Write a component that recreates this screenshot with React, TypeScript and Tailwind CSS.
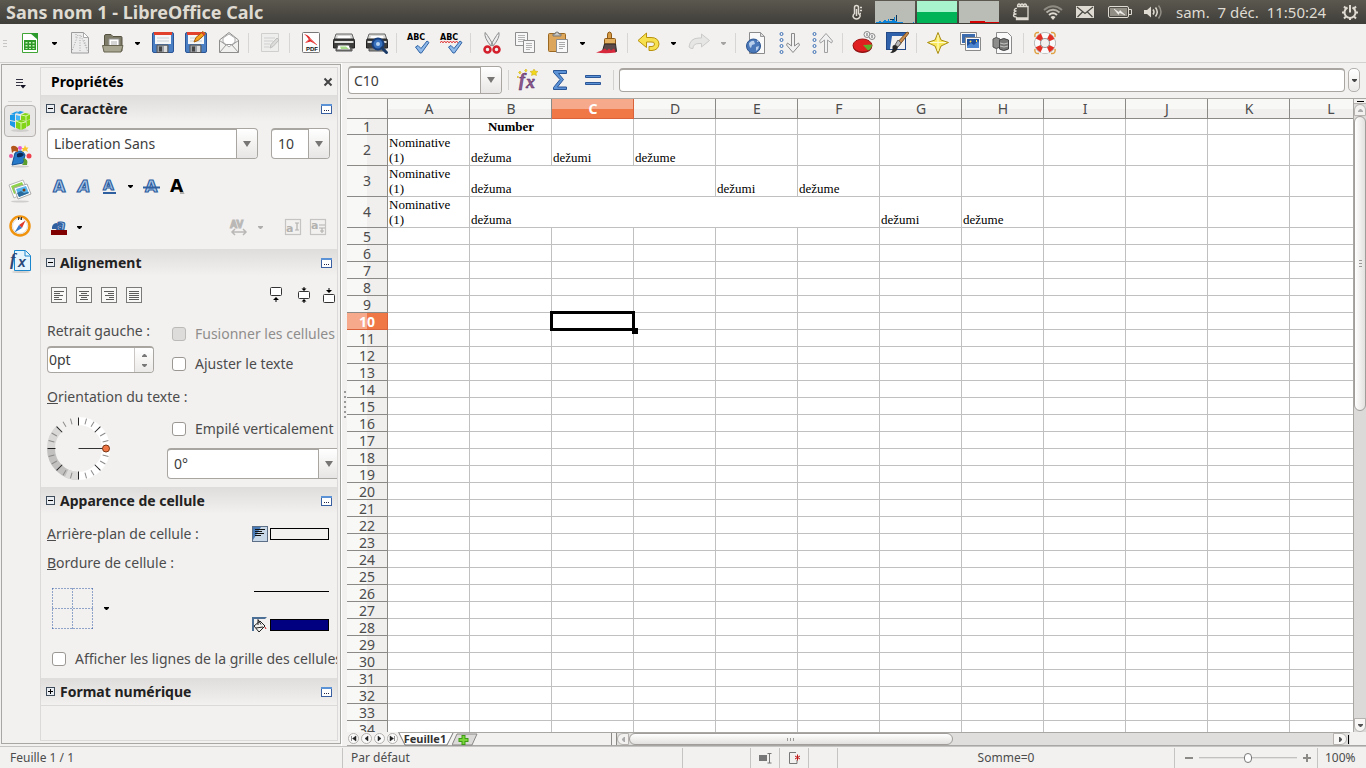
import { useState } from 'react';
import type { ReactNode } from 'react';
import clsx from 'clsx';

const COLUMNS = ['A', 'B', 'C', 'D', 'E', 'F', 'G', 'H', 'I', 'J', 'K', 'L'];
const ROW_COUNT = 34;

type Cell = { text: string; span?: number; wrap?: boolean; bold?: boolean };

const SHEET: Record<number, Record<string, Cell>> = {
  1: { B: { text: 'Number', bold: true } },
  2: {
    A: { text: 'Nominative (1)', wrap: true },
    B: { text: 'dežuma' },
    C: { text: 'dežumi' },
    D: { text: 'dežume' },
  },
  3: {
    A: { text: 'Nominative (1)', wrap: true },
    B: { text: 'dežuma', span: 3 },
    E: { text: 'dežumi' },
    F: { text: 'dežume' },
  },
  4: {
    A: { text: 'Nominative (1)', wrap: true },
    B: { text: 'dežuma', span: 5 },
    G: { text: 'dežumi' },
    H: { text: 'dežume' },
  },
};

function Icon({ size = 24, children }: { size?: number; children: ReactNode }) {
  return (
    <svg width={size} height={size} viewBox={`0 0 ${size} ${size}`} fill="none" className="shrink-0" aria-hidden="true">
      {children}
    </svg>
  );
}

function Caret({ className = 'fill-black' }: { className?: string }) {
  return (
    <svg width="5" height="3" viewBox="0 0 5 3" className={className} aria-hidden="true">
      <path d="M0 0h5v1L3 3H2L0 1z" />
    </svg>
  );
}

function ComboCaret() {
  return (
    <svg width="8" height="6" viewBox="0 0 8 6" className="fill-[#777674]" aria-hidden="true">
      <path d="M0 0h8L4 6z" />
    </svg>
  );
}

/* ---------- toolbar icons ---------- */

const Floppy = (
  <>
    <rect x="1.500" y="1.500" width="21" height="20" rx="1.500" fill="#4a7fc4" stroke="#2a5596" />
    <path d="M3 1h18v3H3z" fill="#e0402c" />
    <path d="M4 4h16v9H4z" fill="#f4f6f8" />
    <path d="M6 7h12M6 10h12" stroke="#c8d0d8" />
    <path d="M6 14h11v7.500H6z" fill="#9aa0a6" stroke="#555" />
    <path d="M8 15.500h3v5H8z" fill="#444" />
    <path d="M13 15h3v6h-3z" fill="#dcdcdc" />
  </>
);

const Printer = (
  <>
    <path d="M4 3h16l2 6H2z" fill="#d8d8d6" stroke="#666" />
    <path d="M6 5h12l1 3H5z" fill="#fff" />
    <path d="M1.500 9.500q0-1.500 1.500-1.500h18q1.500 0 1.500 1.500V17H1.500z" fill="#3d3d3c" stroke="#222" />
    <path d="M2.500 10h19v2h-19z" fill="#dededc" />
    <path d="M4 17h16v3H4z" fill="#8c8c88" stroke="#555" />
  </>
);

const Page = <path d="M4.500 1.500h11l4 4v17h-15z" fill="#fafafa" stroke="#8b8b8b" />;

const NewDoc = (
  <Icon>
    <path d="M4.500 2.500h11l4 4v15h-15z" fill="#fff" stroke="#3fa535" />
    <path d="M12 2h8v7z" fill="#2c9a2c" />
    <path d="M6 9h12v10H6z" fill="#2f9a28" />
    <path d="M7.500 11h2v1.500h-2zM11 11h2v1.500h-2zM14.500 11h2v1.500h-2zM7.500 14h2v1.500h-2zM11 14h2v1.500h-2zM14.500 14h2v1.500h-2zM7.500 17h2v1h-2zM11 17h2v1h-2zM14.500 17h2v1h-2z" fill="#c5efb8" />
  </Icon>
);
const TemplateDoc = (
  <Icon>
    <path d="M3.500 1.500h12l5 5v15.500h-17z" fill="#ececec" stroke="#9c9c9c" />
    <path d="M15.500 1.500v5h5z" fill="#fff" stroke="#aaa" />
    <path d="M10 4L4 20M12 4v17M13 5l7 16M8 3v5M16 9l3 8" stroke="#a5a5a5" strokeDasharray="1 1.500" />
  </Icon>
);
const OpenFolder = (
  <Icon>
    <path d="M3.500 5q0-1.500 1.500-1.500h5l2 2h8q1 0 1 1V20H3.500z" fill="#7e7c68" stroke="#55533f" />
    <path d="M8 8h10v9H8z" fill="#fff" stroke="#999" />
    <path d="M10 11h6M10 13h6" stroke="#aaa" />
    <path d="M1.500 14.500h20.500l-2 6.500H3z" fill="#a8a690" stroke="#66644f" />
  </Icon>
);
const Save = <Icon>{Floppy}</Icon>;
const SaveAs = (
  <Icon>
    {Floppy}
    <path d="M10 11l2-4.500L19 .500 21.500 3 14 9.500z" fill="#f5a21d" stroke="#a25a08" />
    <path d="M18 1.500L20.500 4" stroke="#d33" strokeWidth="1.500" />
  </Icon>
);
const Mail = (
  <Icon>
    <path d="M2.500 9L12 1.500 21.500 9v12.500h-19z" fill="#f1f1f0" stroke="#8e8e8c" />
    <path d="M6 11V7l6-4 6 4v4l-6 5z" fill="#fff" stroke="#aaa" />
    <path d="M2.500 21.500l7-8h5l7 8M2.500 9.500L9 14M21.500 9.500L15 14" stroke="#999" />
  </Icon>
);
const EditDoc = (
  <Icon>
    <path d="M3.500 2.500h17v18h-17z" fill="#eeeeed" stroke="#cfcfce" />
    <path d="M6 7h11M6 10h9M6 13h6M6 16h5" stroke="#cfcfce" />
    <path d="M12 17l1-3.500L19 7l2 2-6 6.500z" fill="#dcdcdb" stroke="#bdbdbc" />
  </Icon>
);
const Pdf = (
  <Icon>
    <rect x="3.500" y="1.500" width="17" height="20" rx="1" fill="#fdfdfd" stroke="#777" />
    <path d="M5 3q5 1 6.500 4.500L18 14l-6.500-3.500L6.500 12 10 8.500Q8 5 5 3z" fill="#e02424" />
    <path d="M6.500 11.500q3-1.500 4-4M11 8l7 6" stroke="#f06a6a" />
    <text x="7" y="20" fontFamily="Liberation Sans" fontWeight="700" fontSize="6" fill="#111">PDF</text>
  </Icon>
);
const Print = (
  <Icon>
    {Printer}
    <path d="M6 14h11l2 5H4.500z" fill="#fff" stroke="#555" />
    <path d="M8 15.500h6l3 2.500H9z" fill="#a7dd8b" />
  </Icon>
);
const Preview = (
  <Icon>
    {Printer}
    <circle cx="13" cy="13" r="5.500" fill="#3770bd" stroke="#183f7d" strokeWidth="2" />
    <circle cx="13" cy="13" r="2" fill="#b8d4f3" />
    <path d="M17 17l4.500 4.500" stroke="#1c3a66" strokeWidth="3" strokeLinecap="round" />
  </Icon>
);
const abc = (
  <text x="1" y="9" fontFamily="DejaVu Sans" fontWeight="700" fontSize="8" fill="#000">ABC</text>
);
const check = (
  <path d="M9.500 16l2.500-1.500 3 3 6-7.500 2 1.500-7.500 10.500H14z" fill="#8fb9e8" stroke="#2f62a5" strokeLinejoin="round" />
);
const Spell = <Icon>{abc}{check}</Icon>;
const AutoSpell = (
  <Icon>
    {abc}
    <path d="M1 11.500l1.500-1 1.500 1 1.500-1 1.500 1 1.500-1 1.500 1 1.500-1 1.500 1 1.500-1 1.500 1 1.500-1 1.500 1" stroke="#e01010" />
    {check}
  </Icon>
);
const Cut = (
  <Icon>
    <path d="M5 1.500q1 0 8 12l-2 1.500Q4 7 5 1.500zM19 1.500q-1 0-8 12l2 1.500q7-8 6-13.500z" fill="#eee" stroke="#8d8d8d" />
    <ellipse cx="7.500" cy="18.500" rx="3" ry="3" stroke="#d3202c" strokeWidth="2.500" />
    <ellipse cx="16.500" cy="18.500" rx="3" ry="3" stroke="#d3202c" strokeWidth="2.500" />
  </Icon>
);
const Copy = (
  <Icon>
    <path d="M2.500 1.500h12v13h-12z" fill="#f7f7f7" stroke="#8d8d8d" />
    <path d="M5 4.500h7M5 6.500h7M5 8.500h7M5 10.500h5" stroke="#b3b3b3" />
    <path d="M10.500 9.500h11v12h-11z" fill="#f7f7f7" stroke="#8d8d8d" />
    <path d="M13 12.500h6M13 14.500h6M13 16.500h6M13 18.500h4" stroke="#b3b3b3" />
  </Icon>
);
const Paste = (
  <Icon>
    <rect x="2.500" y="2.500" width="17" height="18" rx="1" fill="#dca75c" stroke="#9a6820" />
    <path d="M7 5V3h2q0-2 2-2t2 2h2v2z" fill="#c8c8c6" stroke="#777" />
    <path d="M10.500 8.500h11v13h-11z" fill="#f9f9f9" stroke="#8d8d8d" />
    <path d="M13 11.500h6M13 13.500h6M13 15.500h6M13 17.500h4" stroke="#aaa" />
  </Icon>
);
const Brush = (
  <Icon>
    <path d="M11.500 8V4q0-3 2-3t2 3v4z" fill="#d99c46" stroke="#8e5a15" />
    <path d="M9.500 7.500h9q1 0 1 1V13h-11V8.500q0-1 1-1z" fill="#e4b062" stroke="#8e5a15" />
    <path d="M8.500 13h11l1 7.500-14-.500z" fill="#5c4a4a" stroke="#2e2828" />
    <path d="M0 21.500q6-2 9-4l2 2 2-2 2 2 3-2 2 4q-11 1.500-20 0z" fill="#d8283c" />
  </Icon>
);
const Undo = (
  <Icon>
    <path d="M1 9.500L9.500 2v4.500H14q7.500 0 8 6.500-.500 6-7 6.500H12v-4h3q2.500 0 2.500-2.500T14 11H9.500v5.500z" fill="#f7e04e" stroke="#b9920b" strokeLinejoin="round" />
  </Icon>
);
const Redo = (
  <Icon>
    <path d="M22.500 9.500L14.500 3v4H12q-9 0-10 9 2 2 4 1.500Q6 12.500 12 12.500h2.500v3.500z" fill="#e6e6e5" stroke="#cbcbca" strokeLinejoin="round" />
  </Icon>
);
const Globe = (
  <Icon>
    {Page}
    <path d="M15.500 1.500v4h4z" fill="#ddd" stroke="#999" />
    <circle cx="8.500" cy="15" r="7" fill="#4a78b8" stroke="#2d5590" />
    <path d="M4 12q3-3 5-2l1 3-3 1-1 3q-2-1-2-5zM11 16l3-1q0 3-3 5zM12 9l2 2h-2z" fill="#b8d0ec" />
  </Icon>
);
const beads = (
  <>
    <circle cx="3.500" cy="3" r="1.500" stroke="#3b6fb4" />
    <circle cx="3.500" cy="9" r="1.500" stroke="#3b6fb4" />
    <circle cx="3.500" cy="15" r="1.500" stroke="#3b6fb4" />
    <circle cx="3.500" cy="21" r="1.500" stroke="#3b6fb4" />
  </>
);
const SortDown = (
  <Icon>
    {beads}
    <path d="M13.500 2.500h3V15l4-3 1 2-6.500 7.500L8.500 14l1-2 4 3z" fill="#f1f1f1" stroke="#8a8a8a" />
  </Icon>
);
const SortUp = (
  <Icon>
    {beads}
    <path d="M13.500 21.500h3V9l4 3 1-2L15 2.500 8.500 10l1 2 4-3z" fill="#f1f1f1" stroke="#a0a0a0" />
  </Icon>
);
const ChartIcon = (
  <Icon>
    <ellipse cx="10.500" cy="16" rx="9.500" ry="6" fill="#8a1010" />
    <ellipse cx="10.500" cy="14.500" rx="9.500" ry="6.500" fill="#e02020" stroke="#9c1212" />
    <path d="M11 14l9-.500q0 4-4 6z" fill="#5cb02c" />
    <circle cx="15" cy="3.500" r="3" fill="#f4f4f4" stroke="#888" />
    <circle cx="20" cy="5.500" r="3" fill="#f4f4f4" stroke="#888" />
    <path d="M15 2v3M20 4v3" stroke="#666" />
  </Icon>
);
const Draw = (
  <Icon>
    <rect x="1.500" y="1.500" width="19" height="17" fill="#2f62ab" stroke="#234a86" />
    <path d="M7 5h13v13H5z" fill="#f2f1f0" />
    <path d="M22 1l2 1-11 14-3-2z" fill="#c98d4d" stroke="#7c4c1c" />
    <path d="M13 9l3 3-3 4-3-2z" fill="#b8b8b8" stroke="#666" />
    <path d="M10 14l3 2q-1 6-8 6 3-2 2.500-5t2.500-3z" fill="#262626" />
  </Icon>
);
const Navigator = (
  <Icon>
    <path d="M12 1.500l3 7.500 7.500 2.500L15 15l-3 7.500L9 15l-7.500-3.500L9 9z" fill="#f9e85c" stroke="#a98d12" />
    <path d="M12 4v16M4 11.500h16" stroke="#fffbd0" />
  </Icon>
);
const Gallery = (
  <Icon>
    <path d="M1.500 1.500h16v12h-16z" fill="#fafafa" stroke="#8a8a8a" />
    <path d="M3 3h13v9H3z" fill="#3d6cae" />
    <path d="M6.500 6.500h15v13h-15z" fill="#fafafa" stroke="#8a8a8a" />
    <path d="M8 8h12v9H8z" fill="#1d4e9c" />
    <path d="M8 15l4-3 3 2 4-4 1 2v5H8z" fill="#4d85ce" />
    <path d="M11 10l1 1M17 10h1" stroke="#ffd94d" strokeWidth="2" />
  </Icon>
);
const DataSource = (
  <Icon>
    {Page}
    <path d="M1 8q3-3 7 0v8q-4 3-7 0z" fill="#8c8c8b" stroke="#555" />
    <path d="M7.500 9q4-3 9 0v9q-5 3-9 0z" fill="#777776" stroke="#444" />
    <path d="M8 12q4 2 8 0M8 15q4 2 8 0" stroke="#c4c4c4" />
  </Icon>
);
const Help = (
  <Icon>
    <path d="M2 6q-1-5 4-4.500M18 1.500q5-.500 4 4.500M2 18q-1 5 4 4.500M18 22.500q5 .500 4-4.500" stroke="#e0a040" strokeWidth="1.500" />
    <circle cx="12" cy="12" r="7.500" stroke="#9a9a98" strokeWidth="6.500" />
    <circle cx="12" cy="12" r="7.500" stroke="#fafafa" strokeWidth="5.500" />
    <circle cx="12" cy="12" r="7.500" stroke="#e33024" strokeWidth="5.500" strokeDasharray="5.200 6.580" strokeDashoffset="-3.300" />
    <circle cx="12" cy="12" r="4.500" fill="#f2f1f0" stroke="#999" />
  </Icon>
);

type Tool = { kind: 'button'; label: string; icon: ReactNode } | { kind: 'menu'; label: string; dim?: boolean } | { kind: 'sep' };
const b = (label: string, icon: ReactNode): Tool => ({ kind: 'button', label, icon });
const m = (label: string, dim = false): Tool => ({ kind: 'menu', label, dim });
const sep: Tool = { kind: 'sep' };

const TOOLS: Tool[] = [
  b('Nouveau', NewDoc), m('Types de document'), b('Modèles', TemplateDoc), b('Ouvrir', OpenFolder), m('Documents récents'),
  b('Enregistrer', Save), b('Enregistrer sous', SaveAs), b('Envoyer', Mail), sep,
  b('Éditer', EditDoc), sep,
  b('Exporter en PDF', Pdf), b('Imprimer', Print), b('Aperçu', Preview), sep,
  b('Orthographe', Spell), b('Vérification automatique', AutoSpell), sep,
  b('Couper', Cut), b('Copier', Copy), b('Coller', Paste), m('Options de collage'), b('Appliquer le format', Brush), sep,
  b('Annuler', Undo), m('Historique'), b('Rétablir', Redo), m('Historique de rétablissement', true), sep,
  b('Hyperlien', Globe), b('Tri croissant', SortDown), b('Tri décroissant', SortUp), sep,
  b('Diagramme', ChartIcon), b('Dessin', Draw), sep,
  b('Navigateur', Navigator), b('Galerie', Gallery), b('Sources de données', DataSource), sep,
  b('Aide', Help),
];

function TitleBar() {
  return (
    <header className="flex h-6 shrink-0 items-center justify-between bg-gradient-to-b from-[#5b584f] to-[#3f3e39] pr-[6px] pl-[6px] text-[#dfdbd2]">
      <h1 className="text-lg leading-6 font-bold whitespace-nowrap">Sans nom 1 - LibreOffice Calc</h1>
      <div className="flex items-center">
        <Icon size={18}>
          <path d="M6.500 10.500v-6q0-2 2-2t2 2v6q2 1 1.500 3-1 2.500-3.500 2.500T5 13.500q0-2 1.500-3z" stroke="#dfdbd2" strokeWidth="1.500" />
          <path d="M8.500 6v7M12 4.500h2M12 7.500h2M12 10.500h1" stroke="#dfdbd2" strokeWidth="1.500" />
        </Icon>
        <div className="ml-[9px] flex gap-[2px]">
          <svg width="40" height="22" viewBox="0 0 40 22" className="bg-[#babdb6]" aria-hidden="true">
            <path d="M1 22v-1h3v-1h2v1h2v-1h1v-1h2v1h2v-2h1v2h3v-1h2v-3h1v4h2v1h6v1zM38 22v-1h1v1z" fill="#0a82d8" />
            <path d="M21 20v-6h1v6zM15 19v-1h4v1z" fill="#0a3355" />
          </svg>
          <svg width="40" height="22" viewBox="0 0 40 22" className="bg-[#a8f4cc]" aria-hidden="true">
            <path d="M0 11h40v11H0z" fill="#00b356" />
          </svg>
          <svg width="40" height="22" viewBox="0 0 40 22" className="bg-[#babdb6]" aria-hidden="true">
            <path d="M11 20h15v1h14v1H11z" fill="#d40000" />
          </svg>
        </div>
        <div className="ml-3 flex items-center gap-3">
          <Icon size={20}>
            <path d="M6 4.500h11v13H5.500V15M5.500 15q-3 0-3-1.500t3-1.500q-3 0-2.500-1.500T5.500 9q-3 0-2-1.500T6 6.500M6.500 4.500q0-2.500 1.500-2.500t1.500 2.500q0-2.500 1.500-2.500t1.500 2.500q0-2.500 1.500-2.500t1.500 2.500" stroke="#dfdbd2" strokeWidth="1.300" />
            <path d="M6 16.500h11" stroke="#dfdbd2" strokeWidth="2.500" />
          </Icon>
          <Icon size={20}>
            <path d="M1 8q9-7.500 18 0" stroke="#8e8b83" strokeWidth="2" />
            <path d="M3.500 10.500q6.500-5.500 13 0" stroke="#b5b2a9" strokeWidth="2" />
            <path d="M6 13q4-3.500 8 0" stroke="#dfdbd2" strokeWidth="2" />
            <path d="M7.500 15q2.500-2 5 0L10 18z" fill="#dfdbd2" />
          </Icon>
          <Icon size={20}>
            <path d="M1 4h18v12H1z" fill="#dfdbd2" />
            <path d="M2 5l8 6.500L18 5M2.500 15l5-5M17.500 15l-5-5" stroke="#4a4943" strokeWidth="1.200" />
          </Icon>
        </div>
        <svg width="26" height="14" viewBox="0 0 26 14" fill="none" className="ml-3" aria-hidden="true">
          <rect x="1.500" y="1.500" width="20" height="11" rx="1.500" stroke="#dfdbd2" />
          <path d="M3 3h17v8H3z" fill="#918e86" />
          <path d="M22 4.500h2.500v5H22" stroke="#dfdbd2" />
          <path d="M7 4l5 3.500 1-2 5 4.500-5.500-2.500-1 2z" fill="#f5f3ee" stroke="#f5f3ee" strokeWidth=".5" />
        </svg>
        <svg width="24" height="18" viewBox="0 0 24 18" fill="none" className="ml-2" aria-hidden="true">
          <path d="M3 7h3l4-3.500v11L6 11H3z" fill="#dfdbd2" />
          <path d="M12 6.500q2 2.500 0 5M14.500 4.500q3.500 4.500 0 9" stroke="#dfdbd2" strokeWidth="1.500" />
          <path d="M17.500 2.500q5 6.500 0 13" stroke="#918e86" strokeWidth="1.500" />
        </svg>
        <time className="ml-[11px] w-[152px] text-[15px] whitespace-pre">sam.  7 déc.  11:50:24</time>
        <div className="ml-3">
          <Icon size={20}>
            <path d="M7.500 5.500a5.500 5.500 0 1 0 5 0" stroke="#dfdbd2" strokeWidth="2" />
            <path d="M10 3v7.500" stroke="#dfdbd2" strokeWidth="2" />
            <path d="M10 15.500V18M2 10.500h2.500M15.500 10.500H18M4 4.500L6 6.500M16 4.500L14 6.500M4 16.500L6 14.500M16 16.500L14 14.500" stroke="#dfdbd2" strokeWidth="2" />
          </Icon>
        </div>
      </div>
    </header>
  );
}

function Toolbar() {
  return (
    <div role="toolbar" aria-label="Standard" className="flex h-[39px] shrink-0 items-center border-b border-[#d3d1cf] pl-[3px]">
      <div className="flex w-[10px] flex-col gap-[2px]">
        <i className="h-px w-1 bg-[#c8c6c4]" />
        <i className="h-px w-1 bg-[#c8c6c4]" />
        <i className="h-px w-1 bg-[#c8c6c4]" />
      </div>
      {TOOLS.map((tool, i) => {
        if (tool.kind === 'sep') {
          return <span key={i} className="mr-[4px] ml-[3px] h-5 w-px shrink-0 bg-[#d8d6d4]" />;
        }
        if (tool.kind === 'menu') {
          return (
            <button key={i} type="button" aria-label={tool.label} className="flex h-8 w-[17px] shrink-0 items-center justify-center">
              <Caret className={tool.dim ? 'fill-[#a5a3a1]' : 'fill-black'} />
            </button>
          );
        }
        return (
          <button key={i} type="button" aria-label={tool.label} className="flex h-8 w-[33px] shrink-0 items-center justify-center">
            {tool.icon}
          </button>
        );
      })}
    </div>
  );
}

/* ---------- sidebar ---------- */

const DECKS = [
  {
    label: 'Propriétés',
    icon: (
      <Icon>
        <ellipse cx="12" cy="21.500" rx="9" ry="1.500" fill="#d0cecc" />
        <path d="M2 6l5-1v7l-5-1zM2 12l5 1v6l-5-3zM8 4l4-2 4 1-4 2zM3 5l4-2 3-1-3 3z" fill="#1c9ae8" />
        <path d="M8 6l4 1v5l-4-1z" fill="#46b6f4" />
        <path d="M13 6l4-2 5 1v5l-4 2-5-1zM8 12l5-1 5 2v6l-5 2-5-2zM18.500 12l3.500-1.500V16l-3.500 2z" fill="#82d416" />
        <path d="M13 6l5 1v5M18 7l4-2M8 12l5 2v7M13 14l5-1" stroke="#d9f8a8" />
      </Icon>
    ),
  },
  {
    label: 'Styles et formatage',
    icon: (
      <Icon>
        <ellipse cx="12" cy="22.500" rx="9" ry="1" fill="#d0cecc" />
        <path d="M7 9q7-5 10 2l-2 8-11 2z" fill="#2678c8" stroke="#134f90" />
        <path d="M9 10q5-3 7 1-3 3-7 2z" fill="#0a2a55" />
        <path d="M3 3q3-3 7 1v4L6 7 4 9z" fill="#b3561c" />
        <path d="M17 1l1 2.500h2.500L19 5.500l1 2.500-3-1.500L14 8l1-2.500L13 4h3z" fill="#f9c52a" />
        <circle cx="3" cy="12" r="2" fill="#e85a9b" />
        <circle cx="12" cy="4" r="2" fill="#e85ad0" />
        <circle cx="21" cy="12" r="2.500" fill="#ef3f4a" />
        <path d="M15 14q6 1 4 7h-5q3-3 1-7z" fill="#5c9e2e" />
      </Icon>
    ),
  },
  {
    label: 'Galerie',
    icon: (
      <Icon>
        <ellipse cx="12" cy="22.500" rx="9" ry="1" fill="#d0cecc" />
        <path d="M1 6l14-5 5 11-14 7z" fill="#fff" stroke="#b8b8b8" />
        <path d="M3 7l11-4 3 7-11 5z" fill="#8fd14a" />
        <path d="M6 9l13-4 4 10-13 5z" fill="#fff" stroke="#a8a8a8" />
        <path d="M8 10l10-3 3 7-10 4z" fill="#57b4ec" />
        <path d="M9 14l4-2 3 2 4-1 1 1-10 4z" fill="#2c6a9c" />
        <circle cx="16" cy="11" r="1.500" fill="#7a3f18" />
      </Icon>
    ),
  },
  {
    label: 'Navigateur',
    icon: (
      <Icon>
        <circle cx="12" cy="12" r="9.500" fill="#fff" stroke="#f0930f" strokeWidth="2.500" />
        <circle cx="12" cy="12" r="7.500" stroke="#ddd" />
        <path d="M17.500 6.500L14 14l-3-3z" fill="#e03a2c" />
        <path d="M6.500 18.500L11 11l3 3z" fill="#3a78c8" />
        <path d="M10.500 6V3l3 3V3" stroke="#333" />
      </Icon>
    ),
  },
  {
    label: 'Fonctions',
    icon: (
      <Icon>
        <ellipse cx="13" cy="23" rx="9" ry="1" fill="#d0cecc" />
        <path d="M6.500 1.500h11l5 5v15h-16z" fill="#e8f4fc" stroke="#1a86cc" />
        <path d="M17 2v5h5" stroke="#1a86cc" />
        <text x="2" y="16" fontFamily="Liberation Serif" fontStyle="italic" fontWeight="700" fontSize="17" fill="#2b4878">f</text>
        <text x="10" y="18" fontFamily="Liberation Sans" fontStyle="italic" fontWeight="700" fontSize="14" fill="#2b4878">x</text>
      </Icon>
    ),
  },
];

function Section({ title, open = true, children }: { title: string; open?: boolean; children?: ReactNode }) {
  return (
    <section>
      <div className="flex h-[27px] items-center bg-gradient-to-b from-[#dfdddb] to-[#f2f1f0] pr-[5px] pl-[5px]">
        <button type="button" aria-label={title} aria-expanded={open} className="shrink-0">
          <Icon size={9}>
            <rect x=".5" y=".5" width="8" height="8" fill="#e9edf2" stroke="#3f4c5c" />
            <path d={open ? 'M2 4.500h5' : 'M2 4.500h5M4.500 2v5'} stroke="#000" />
          </Icon>
        </button>
        <h3 className="ml-[5px] flex-1 text-sm font-bold text-[#222]">{title}</h3>
        <button type="button" aria-label={`Options : ${title}`}>
          <svg width="11" height="10" viewBox="0 0 11 10" fill="none" aria-hidden="true">
            <rect x=".5" y=".5" width="10" height="9" fill="#fff" stroke="#3a5fa0" />
            <path d="M0 1h11" stroke="#5b93d6" strokeWidth="2" />
            <path d="M3 6.500h1M5 6.500h1M7 6.500h1" stroke="#224" />
          </svg>
        </button>
      </div>
      {open && children}
    </section>
  );
}

function Combo({ label, options, className }: { label: string; options: string[]; className: string }) {
  return (
    <div className={clsx('relative h-[31px] shrink-0', className)}>
      <select aria-label={label} className="h-full w-full appearance-none rounded border border-t-2 border-[#a9a5a1] bg-white pl-[6px] text-sm text-[#3c3c3c]">
        {options.map((o) => (
          <option key={o}>{o}</option>
        ))}
      </select>
      <span className="pointer-events-none absolute top-px right-px bottom-px flex w-[21px] items-center justify-center rounded-r-[3px] border-l border-[#a9a5a1] bg-gradient-to-b from-white to-[#e8e6e4]">
        <ComboCaret />
      </span>
    </div>
  );
}

function Check({ disabled, children }: { disabled?: boolean; children: ReactNode }) {
  return (
    <label className={clsx('flex h-5 items-center text-sm whitespace-nowrap', disabled ? 'text-[#8f8d8b]' : 'text-[#4c4c4c]')}>
      <input
        type="checkbox"
        disabled={disabled}
        className="mr-[9px] h-[14px] w-[14px] shrink-0 appearance-none rounded-[3px] border border-[#9b9894] bg-white checked:bg-[#f07746] disabled:border-[#bcbab7] disabled:bg-[#dddcda]"
      />
      <span>{children}</span>
    </label>
  );
}

function LetterButton({ label, children }: { label: string; children: ReactNode }) {
  return (
    <button type="button" aria-label={label} className="flex h-6 w-[25px] shrink-0 items-center justify-center">
      <svg
        width="19"
        height="20"
        viewBox="0 0 19 20"
        className="overflow-visible"
        fontFamily="DejaVu Sans"
        fontWeight="700"
        fontSize="16"
        strokeWidth="1.2"
        aria-hidden="true"
      >
        {children}
      </svg>
    </button>
  );
}

function AlignIcon({ lines }: { lines: string }) {
  return (
    <Icon size={17}>
      <rect x=".5" y=".5" width="15" height="15" fill="#f8f8f7" stroke="#7a7a79" />
      <path d={lines} stroke="#5c5c5b" />
    </Icon>
  );
}

function Dial() {
  const ticks = Array.from({ length: 24 }, (_, i) => i * 15);
  return (
    <svg width="63" height="63" viewBox="-31.500 -31.500 63 63" fill="none" aria-label="Orientation" role="img">
      <path d="M0-27.500A27.500 27.500 0 0 1 0 27.500" stroke="#fff" strokeWidth="8" />
      <path d="M0 27.500A27.500 27.500 0 0 1-27.500 0" stroke="#c2c1c0" strokeWidth="8" />
      <path d="M-27.500 0A27.500 27.500 0 0 1-19 -20" stroke="#d9d8d7" strokeWidth="8" />
      <path d="M0 27.500A27.500 27.500 0 0 1-12 25" stroke="#dcdbda" strokeWidth="8" />
      {ticks.map((t) => (
        <path key={t} d={t % 45 === 0 ? 'M23 0h8' : 'M25 0h6'} stroke={t % 45 === 0 ? '#222' : '#8c8b8a'} transform={`rotate(${t})`} />
      ))}
      <path d="M0 0h27" stroke="#333" />
      <circle cx="27.500" cy="0" r="3.500" fill="#f07746" stroke="#7a3414" />
    </svg>
  );
}

function CharacterSection() {
  return (
    <Section title="Caractère">
      <div className="pt-[6px] pb-[10px] pl-[6px]">
        <div className="flex gap-[13px]">
          <Combo label="Police" options={['Liberation Sans']} className="w-[211px]" />
          <Combo label="Taille" options={['10']} className="w-[59px]" />
        </div>
        <div className="mt-[15px] flex items-center">
          <LetterButton label="Gras">
            <text x="3" y="16" fill="#a9c8ec" stroke="#2f5f9f">A</text>
          </LetterButton>
          <LetterButton label="Italique">
            <text x="3" y="16" fill="#a9c8ec" stroke="#2f5f9f" fontStyle="italic">A</text>
          </LetterButton>
          <LetterButton label="Souligné">
            <text x="3" y="14" fill="#a9c8ec" stroke="#2f5f9f" fontSize="14">A</text>
            <path d="M3 17h13" stroke="#2f5f9f" strokeWidth="2" />
          </LetterButton>
          <button type="button" aria-label="Styles de soulignement" className="flex h-6 w-[17px] items-center justify-center">
            <Caret />
          </button>
          <LetterButton label="Barré">
            <text x="3" y="16" fill="#a9c8ec" stroke="#2f5f9f">A</text>
            <path d="M1 11.500h17" stroke="#2f5f9f" strokeWidth="2" />
          </LetterButton>
          <LetterButton label="Ombre">
            <path d="M10 4l6 13h-3" stroke="#b0aeac" strokeWidth="2" fill="none" />
            <text x="3" y="16" fill="#000" fontSize="17">A</text>
          </LetterButton>
        </div>
        <div className="mt-[17px] flex items-center pr-[6px]">
          <LetterButton label="Couleur de police">
            <text x="6" y="13" fill="#a9c8ec" stroke="#2f5f9f" fontStyle="italic" fontSize="14">a</text>
            <path d="M2 10q1-4 5-4l1 6H2z" fill="#2f5f9f" />
            <path d="M1 13h16v5H1z" fill="#800000" />
          </LetterButton>
          <button type="button" aria-label="Choisir une couleur" className="flex h-6 w-[15px] items-center justify-center">
            <Caret />
          </button>
          <span className="flex-1" />
          <LetterButton label="Espacement">
            <text x="0" y="11" fill="none" stroke="#bab8b6" fontSize="10" fontFamily="Liberation Sans">AV</text>
            <path d="M2 15h14M5 12l-3 3 3 3M13 12l3 3-3 3" fill="none" stroke="#bab8b6" strokeWidth="1.500" />
          </LetterButton>
          <button type="button" aria-label="Choisir un espacement" className="mr-3 flex h-6 w-[17px] items-center justify-center">
            <Caret className="fill-[#b0aeac]" />
          </button>
          <LetterButton label="Exposant">
            <rect x="1.500" y="2.500" width="15" height="15" fill="none" stroke="#c6c4c2" />
            <text x="2" y="15" fill="#b3b1af" fontSize="11">a</text>
            <path d="M11 6h4M13 6v7M11 13h4" stroke="#b3b1af" fill="none" />
          </LetterButton>
          <LetterButton label="Indice">
            <rect x="1.500" y="2.500" width="15" height="15" fill="none" stroke="#c6c4c2" />
            <text x="2" y="12" fill="#b3b1af" fontSize="11">a</text>
            <path d="M10 8h6M10 11h6M13 11v5M11 14h4" stroke="#b3b1af" fill="none" />
          </LetterButton>
        </div>
      </div>
    </Section>
  );
}

const ALIGNS = [
  ['Gauche', 'M3 4.500h10M3 6.500h6M3 8.500h9M3 10.500h5M3 12.500h8'],
  ['Centré', 'M3 4.500h10M5 6.500h6M3 8.500h10M5 10.500h6M4 12.500h8'],
  ['Droite', 'M3 4.500h10M7 6.500h6M4 8.500h9M8 10.500h5M5 12.500h8'],
  ['Justifié', 'M3 4.500h10M3 6.500h10M3 8.500h10M3 10.500h10M3 12.500h10'],
];

function AlignmentSection() {
  return (
    <Section title="Alignement">
      <div className="pt-[7px] pb-[7px] pl-[6px]">
        <div className="flex h-6 items-center">
          {ALIGNS.map(([label, lines]) => (
            <button key={label} type="button" aria-label={label} className="flex h-6 w-[25px] items-center justify-center">
              <AlignIcon lines={lines} />
            </button>
          ))}
          <span className="flex-1" />
          <button type="button" aria-label="Haut" className="w-[28px]">
            <Icon size={16}>
              <rect x="2.500" y=".5" width="11" height="8" rx="1" fill="#fff" stroke="#333" />
              <path d="M8 10l3 3H5zM7.500 12h1v3h-1z" fill="#000" />
            </Icon>
          </button>
          <button type="button" aria-label="Milieu" className="w-[25px]">
            <Icon size={16}>
              <rect x="2.500" y="4.500" width="11" height="7" rx="1" fill="#fff" stroke="#333" />
              <path d="M8 4L5.500 1.500h5zM7.500 0h1v2h-1zM8 12l2.500 2.500h-5zM7.500 14h1v2h-1z" fill="#000" />
            </Icon>
          </button>
          <button type="button" aria-label="Bas" className="w-4">
            <Icon size={16}>
              <rect x="2.500" y="7.500" width="11" height="8" rx="1" fill="#fff" stroke="#333" />
              <path d="M8 6L5 3h6zM7.500 1h1v3h-1z" fill="#000" />
            </Icon>
          </button>
        </div>

        <div className="mt-[14px] flex">
          <div className="w-[120px] shrink-0">
            <label htmlFor="indent" className="block h-5 text-sm leading-5 whitespace-nowrap">
              Retrait <u>g</u>auche :
            </label>
            <div className="mt-[5px] flex h-[27px] w-[107px] overflow-hidden rounded border border-t-2 border-[#a9a5a1] bg-white">
              <input id="indent" defaultValue="0pt" className="min-w-0 flex-1 pl-px text-sm text-[#3c3c3c] outline-none" />
              <span className="flex w-[19px] flex-col items-center justify-center gap-[7px] border-l border-[#c9c6c3] bg-gradient-to-b from-white to-[#eceae8]">
                <Caret className="rotate-180 fill-[#777]" />
                <Caret className="fill-[#777]" />
              </span>
            </div>
            <span className="mt-[14px] block h-5 text-sm leading-5 whitespace-nowrap">
              <u>O</u>rientation du texte :
            </span>
          </div>
          <div className="flex flex-col gap-[10px] pt-[3px] pl-[5px]">
            <Check disabled>Fusionner les cellules</Check>
            <Check>Ajuster le texte</Check>
          </div>
        </div>

        <div className="mt-[10px] flex">
          <div className="w-[120px] shrink-0">
            <Dial />
          </div>
          <div className="shrink-0">
            <div className="pt-[2px] pl-[5px]">
              <Check>Empilé verticalement</Check>
            </div>
            <Combo label="Angle" options={['0°']} className="mt-[9px] w-[173px]" />
          </div>
        </div>
      </div>
    </Section>
  );
}

function AppearanceSection() {
  return (
    <Section title="Apparence de cellule">
      <div className="pt-[10px] pb-[9px] pl-[6px]">
        <div className="flex h-5 items-center text-sm whitespace-nowrap">
          <span><u>A</u>rrière-plan de cellule :</span>
          <button type="button" aria-label="Couleur d'arrière-plan" className="mr-[8px] ml-auto flex items-center gap-[2px]">
            <Icon size={16}>
              <rect x=".5" y=".5" width="15" height="15" fill="#c9d8e8" stroke="#5c6f86" />
              <path d="M1 1h8L1 14z" fill="#4a7ab6" />
              <path d="M3 3.500h10M3 5.500h7M3 7.500h9M3 9.500h6" stroke="#111" />
            </Icon>
            <i className="h-3 w-[59px] border border-black" />
          </button>
        </div>
        <div className="mt-[9px] h-5 text-sm leading-5"><u>B</u>ordure de cellule :</div>
        <div className="mt-[14px] flex h-[46px] items-start justify-between pr-[8px] pl-[5px]">
          <button type="button" aria-label="Bordures" className="flex items-center gap-[10px]">
            <Icon size={42}>
              <path d="M.5 1.500h41M.5 21.500h41M.5 41.500h41M.5 1.500v40M20.500 1.500v40M40.500 1.500v40" stroke="#2f55a0" strokeDasharray="1 2" />
            </Icon>
            <Caret />
          </button>
          <div className="flex h-full flex-col items-end justify-between pt-1">
            <button type="button" aria-label="Style de ligne" className="h-px w-[75px] bg-black" />
            <button type="button" aria-label="Couleur de ligne" className="flex items-center gap-[2px]">
              <Icon size={16}>
                <path d="M0 0h15l-2 2H2v12H0z" fill="#4c6f96" />
                <path d="M2 9l6-5 5 5-6 6z" fill="#f2f1f0" stroke="#222" />
                <path d="M6 8V2.500l3 5M4 11l7-1" stroke="#222" />
                <path d="M13 10l1 2" stroke="#c22" />
              </Icon>
              <i className="h-3 w-[59px] border border-black bg-[#000080]" />
            </button>
          </div>
        </div>
        <div className="mt-4 pl-[5px]">
          <Check>Afficher les lignes de la <u>g</u>rille des cellules</Check>
        </div>
      </div>
    </Section>
  );
}

function Sidebar() {
  const [deck, setDeck] = useState('Propriétés');
  return (
    <aside className="mt-px mb-[2px] ml-px flex w-[340px] shrink-0 border border-[#a9a7a4] text-[#4c4c4c]">
      <nav className="flex w-[38px] shrink-0 flex-col items-center pt-[9px] pr-[2px]">
        <button type="button" aria-label="Menu" className="h-5">
          <Icon size={16}>
            <path d="M4 3.500h7M4 6.500h7M4 9.500h4" stroke="#334" />
            <path d="M8 9h6l-3 3.500z" fill="#112" />
          </Icon>
        </button>
        <i className="mt-[7px] mb-[3px] h-px w-6 bg-[#d8d6d4]" />
        <div className="flex flex-col gap-[3px]">
          {DECKS.map((d) => (
            <button
              key={d.label}
              type="button"
              aria-label={d.label}
              onClick={() => setDeck(d.label)}
              className={clsx('flex h-8 w-8 items-center justify-center rounded border', deck === d.label ? 'border-[#b5b2af] bg-[#e9e7e6]' : 'border-transparent')}
            >
              {d.icon}
            </button>
          ))}
        </div>
      </nav>
      <div className="mt-[2px] mr-[2px] mb-[2px] flex min-w-0 flex-1 flex-col overflow-hidden border border-[#dcdad8]">
        <div className="flex h-[27px] shrink-0 items-center justify-between pr-[4px] pl-[10px]">
          <h2 className="text-sm font-bold text-black">Propriétés</h2>
          <button type="button" aria-label="Fermer">
            <Icon size={10}>
              <path d="M1.500 1.500l7 7M8.500 1.500l-7 7" stroke="#444" strokeWidth="2" />
            </Icon>
          </button>
        </div>
        <CharacterSection />
        <AlignmentSection />
        <AppearanceSection />
        <Section title="Format numérique" open={false} />
        <i className="h-px bg-[#dcdad8]" />
      </div>
    </aside>
  );
}

/* ---------- sheet ---------- */

function FormulaBar() {
  return (
    <div className="flex h-9 shrink-0 items-center border-b border-[#a9a7a4] pb-px">
      <div className="relative ml-px h-7 w-[154px]">
        <input aria-label="Zone de nom" defaultValue="C10" className="h-full w-full rounded border border-t-2 border-[#a9a5a1] bg-white pl-[5px] text-sm text-[#3c3c3c]" />
        <button type="button" aria-label="Plages nommées" className="absolute top-px right-px bottom-px flex w-[21px] items-center justify-center rounded-r-[3px] border-l border-[#a9a5a1] bg-gradient-to-b from-white to-[#e8e6e4]">
          <ComboCaret />
        </button>
      </div>
      <i className="mx-[6px] h-5 w-px bg-[#d3d1cf]" />
      <div className="flex gap-[9px]">
        <button type="button" aria-label="Assistant Fonctions">
          <Icon>
            <text x="4" y="18" fontFamily="Liberation Serif" fontStyle="italic" fontWeight="700" fontSize="18" fill="#8d5a92" stroke="#5a2d60" strokeWidth=".5">f</text>
            <text x="11" y="20" fontFamily="Liberation Serif" fontStyle="italic" fontWeight="700" fontSize="18" fill="#8d5a92" stroke="#5a2d60" strokeWidth=".5">x</text>
            <path d="M19 1l1 2 3 .500-2 1.500.500 2.500-2.500-1-2.500 1 .500-2.500-2-1.500 3-.500zM11 1l1 1.500-1 1.500-1.500-1.500zM5 3l1 1.500L5 6 3.500 4.500zM3 8l.500 1L3 10l-1-1z" fill="#f2d81c" stroke="#c9a810" strokeWidth=".5" />
          </Icon>
        </button>
        <button type="button" aria-label="Somme">
          <Icon>
            <path d="M5.500 2.500h13v3h-8l5 6-6 7.500h9v2.500h-13v-2l6.500-8-6.500-7z" fill="#5c93d6" stroke="#2a5596" />
          </Icon>
        </button>
        <button type="button" aria-label="Fonction">
          <Icon>
            <path d="M4.500 7.500h15v2h-15zM4.500 14.500h15v2h-15z" fill="#5c93d6" stroke="#2a5596" />
          </Icon>
        </button>
      </div>
      <i className="mr-[5px] ml-[8px] h-5 w-px bg-[#d3d1cf]" />
      <input aria-label="Ligne de saisie" className="h-[24px] min-w-0 flex-1 rounded border border-t-2 border-[#a9a5a1] bg-white px-1 text-sm" />
      <button type="button" aria-label="Agrandir" className="mr-[6px] ml-[3px] flex h-6 w-3 items-center justify-center rounded-[5px] border border-[#b3b0ad] bg-gradient-to-b from-white to-[#eceae8]">
        <Caret className="fill-[#444]" />
      </button>
    </div>
  );
}

function SheetRow({ row }: { row: number }) {
  const data = SHEET[row] ?? {};
  const cells: ReactNode[] = [];
  for (let c = 0; c < COLUMNS.length; ) {
    const cell = data[COLUMNS[c]];
    const selected = row === 10 && COLUMNS[c] === 'C';
    cells.push(
      <td
        key={c}
        colSpan={cell?.span ?? 1}
        className={clsx(
          'relative border-r border-b border-[#c0c0c0] p-0 pl-px align-bottom',
          cell?.bold && 'text-center font-bold',
        )}
      >
        {cell?.wrap ? <div className="w-[70px]">{cell.text}</div> : cell?.text}
        {selected && (
          <div className="absolute -top-[2px] -right-[2px] -bottom-[2px] -left-[2px] z-10 border-3 border-black">
            <i className="absolute -right-[6px] -bottom-[6px] h-[6px] w-[6px] bg-black" />
          </div>
        )}
      </td>,
    );
    c += cell?.span ?? 1;
  }
  return (
    <tr className={row === 1 ? 'h-4' : row < 5 ? 'h-[31px]' : 'h-[17px]'}>
      <th
        scope="row"
        className={clsx(
          'border-r border-b p-0 text-sm',
          row < 5 && row > 1 ? 'leading-[30px]' : 'leading-[15px]',
          row === 10
            ? 'border-[#d9623a] bg-linear-to-r from-[#f7a98c] from-50% to-[#f07746] to-50% font-bold text-white'
            : 'border-[#8c8a87] bg-linear-to-r from-[#f8f8f7] from-50% to-[#f0efee] to-50% font-normal text-[#4c4c4c]',
        )}
      >
        {row}
      </th>
      {cells}
    </tr>
  );
}

function Sheet() {
  return (
    <div className="min-w-0 flex-1 overflow-hidden bg-white">
      <table className="w-[1025px] table-fixed border-separate border-spacing-0 text-[13px] leading-[15px] text-black">
        <colgroup>
          <col className="w-[41px]" />
          {COLUMNS.map((c) => (
            <col key={c} className="w-[82px]" />
          ))}
        </colgroup>
        <thead className="text-sm leading-[19px]">
          <tr className="h-5">
            <td className="border-r border-b border-[#8c8a87] bg-[#f5f4f3] p-0" />
            {COLUMNS.map((c) => (
              <th
                key={c}
                scope="col"
                className={clsx(
                  'border-r border-b p-0 pl-px',
                  c === 'C'
                    ? 'border-[#d9623a] bg-linear-to-b from-[#f7a98c] from-50% to-[#f07746] to-50% font-bold text-white'
                    : 'border-[#8c8a87] bg-linear-to-b from-[#f8f8f7] from-50% to-[#f0efee] to-50% font-normal text-[#4c4c4c]',
                )}
              >
                {c}
              </th>
            ))}
          </tr>
        </thead>
        <tbody className="[&_td]:font-[Liberation_Serif,serif]">
          {Array.from({ length: ROW_COUNT }, (_, i) => (
            <SheetRow key={i} row={i + 1} />
          ))}
        </tbody>
      </table>
    </div>
  );
}

function VerticalScroll() {
  return (
    <div className="flex w-[13px] shrink-0 flex-col border-l border-[#a9a7a4] bg-[#dbdad8]">
      <i className="flex h-[5px] items-center justify-center border-b border-[#b5b2af] bg-[#f2f1f0]"><i className="h-px w-[7px] bg-black" /></i>
      <button type="button" aria-label="Défiler vers le haut" className="flex h-[12px] items-center justify-center rounded-t-[6px] border border-[#b5b2af] bg-[#f2f1f0]">
        <Caret className="rotate-180 fill-[#aaa]" />
      </button>
      <div className="flex min-h-0 flex-1 flex-col">
        <div className="flex h-[49%] flex-col items-center justify-center gap-[2px] rounded-[6px] border border-[#a09d9a] bg-linear-to-r from-white to-[#e3e1df]">
          <i className="h-px w-[3px] bg-[#999]" />
          <i className="h-px w-[3px] bg-[#999]" />
          <i className="h-px w-[3px] bg-[#999]" />
        </div>
      </div>
      <button type="button" aria-label="Défiler vers le bas" className="flex h-[14px] items-center justify-center rounded-b-[6px] border border-[#b5b2af] bg-[#f8f7f6]">
        <Caret className="fill-[#555]" />
      </button>
    </div>
  );
}

const NAV = [
  ['Première feuille', 'M3.500 3v5M8 3v5L4.500 5.500z'],
  ['Feuille précédente', 'M7 3v5L4 5.500z'],
  ['Feuille suivante', 'M4 3v5L7 5.500z'],
  ['Dernière feuille', 'M7.500 3v5M3 3v5L6.500 5.500z'],
];

function SheetTabs() {
  return (
    <div className="flex h-[14px] shrink-0 items-center border-b border-[#a9a7a4]">
      <div className="ml-px flex gap-[2px]">
        {NAV.map(([label, d]) => (
          <button key={label} type="button" aria-label={label}>
            <Icon size={11}>
              <circle cx="5.500" cy="5.500" r="5" fill="#fafafa" stroke="#b3b0ad" />
              <path d={d} fill="#222" stroke="#222" strokeWidth=".5" />
            </Icon>
          </button>
        ))}
      </div>
      <div className="flex h-full flex-1 items-center border-t border-[#a9a7a4]">
        <button type="button" className="relative h-[13px] w-[54px] shrink-0 text-center text-[11px] leading-3 font-bold text-[#333]">
          <svg width="56" height="13" viewBox="0 0 56 13" fill="none" className="absolute inset-0" aria-hidden="true">
            <path d="M1 0l6 12h42l6-12z" fill="#fff" />
            <path d="M1 0l6 12h42l6-12" stroke="#777" />
          </svg>
          <span className="relative">Feuille1</span>
        </button>
        <button type="button" aria-label="Insérer une feuille" className="shrink-0">
          <svg width="26" height="13" viewBox="0 0 26 13" fill="none" aria-hidden="true">
            <path d="M0 12L5 1h20l-5 11z" fill="#dcdad8" stroke="#8a8886" />
            <path d="M11.500 2v10M6.500 7h10" stroke="#3c9a14" strokeWidth="4" />
            <path d="M11.500 3v8M7.500 7h8" stroke="#7ad53a" strokeWidth="2" />
          </svg>
        </button>
      </div>
      <div className="flex h-full w-[739px] shrink-0 items-center border-t border-[#a9a7a4] bg-[#dfdedc]">
        <i className="h-full w-[6px] border-x border-[#8c8a87] bg-[#f2f1f0]" />
        <button type="button" aria-label="Défiler à gauche" className="flex h-full w-[12px] items-center justify-center rounded-l-[6px] border border-[#b5b2af] bg-[#f2f1f0]">
          <Caret className="rotate-90 fill-[#aaa]" />
        </button>
        <div className="flex h-full flex-1">
          <div className="flex h-full w-[46%] items-center justify-center gap-[2px] rounded-[6px] border border-[#a09d9a] bg-gradient-to-b from-white to-[#e3e1df]">
            <i className="h-[3px] w-px bg-[#999]" />
            <i className="h-[3px] w-px bg-[#999]" />
            <i className="h-[3px] w-px bg-[#999]" />
          </div>
        </div>
        <button type="button" aria-label="Défiler à droite" className="flex h-full w-[14px] items-center justify-center rounded-r-[6px] border border-[#b5b2af] bg-[#f8f7f6]">
          <Caret className="-rotate-90 fill-[#555]" />
        </button>
        <i className="mx-px h-[9px] w-px bg-black" />
      </div>
      <span className="w-4 shrink-0" />
    </div>
  );
}

function StatusBar() {
  const divider = 'flex h-5 items-center border-l border-[#c6c4c2]';
  return (
    <footer className="flex h-[22px] shrink-0 items-center border-t border-[#c6c4c2] text-xs text-[#4c4c4c]">
      <div className="w-[342px] shrink-0 pl-[10px]">Feuille 1 / 1</div>
      <div className={clsx(divider, 'w-[340px] pl-2')}>Par défaut</div>
      <div className={clsx(divider, 'w-[68px]')} />
      <div className={clsx(divider, 'w-[29px] justify-center')}>
        <Icon size={14}>
          <path d="M1 4h8v6H1z" fill="#777" />
          <path d="M9.500 2.500h4M11.500 3v9M9.500 12h4" stroke="#777" />
        </Icon>
      </div>
      <div className={clsx(divider, 'w-[29px] justify-center')}>
        <Icon size={14}>
          <path d="M9 1.500H2.500v11H10V9" stroke="#777" />
          <path d="M10.500 3.500v6M8 5l5 3M13 5l-5 3" stroke="#c01818" />
        </Icon>
      </div>
      <div className={clsx(divider, 'w-[29px]')} />
      <div className={clsx(divider, 'flex-1 justify-center')}>Somme=0</div>
      <div className={clsx(divider, 'w-[143px] gap-[5px] pl-[9px]')}>
        <button type="button" aria-label="Zoom arrière" className="h-[10px] w-[10px]">
          <Icon size={10}><path d="M1 5h8" stroke="#8c8a87" strokeWidth="2" /></Icon>
        </button>
        <input
          type="range"
          aria-label="Zoom"
          className="h-[10px] w-[98px] appearance-none bg-linear-to-b from-transparent from-40% via-[#b3b1af] via-40% to-transparent to-60% [&::-webkit-slider-thumb]:h-[10px] [&::-webkit-slider-thumb]:w-[8px] [&::-webkit-slider-thumb]:appearance-none [&::-webkit-slider-thumb]:rounded-full [&::-webkit-slider-thumb]:border [&::-webkit-slider-thumb]:border-[#777] [&::-webkit-slider-thumb]:bg-white"
        />
        <button type="button" aria-label="Zoom avant" className="h-[10px] w-[10px]">
          <Icon size={10}><path d="M1 5h8M5 1v8" stroke="#8c8a87" strokeWidth="2" /></Icon>
        </button>
      </div>
      <div className={clsx(divider, 'w-[49px] pl-[7px]')}>100%</div>
    </footer>
  );
}

export default function App() {
  return (
    <div className="flex h-screen flex-col overflow-hidden bg-[#f2f1f0] font-['Noto_Sans',sans-serif]">
      <TitleBar />
      <Toolbar />
      <main className="flex min-h-0 flex-1">
        <Sidebar />
        <div className="flex w-[6px] shrink-0 flex-col items-center justify-center gap-[3px] border-l border-white">
          <i className="h-[2px] w-[2px] bg-[#999]" />
          <i className="h-[2px] w-[2px] bg-[#999]" />
          <i className="h-[2px] w-[2px] bg-[#999]" />
          <i className="h-[2px] w-[2px] bg-[#999]" />
          <i className="h-[2px] w-[2px] bg-[#999]" />
          <i className="h-[2px] w-[2px] bg-[#999]" />
        </div>
        <div className="flex min-w-0 flex-1 flex-col">
          <FormulaBar />
          <div className="flex min-h-0 flex-1">
            <Sheet />
            <VerticalScroll />
          </div>
          <SheetTabs />
        </div>
      </main>
      <StatusBar />
    </div>
  );
}
